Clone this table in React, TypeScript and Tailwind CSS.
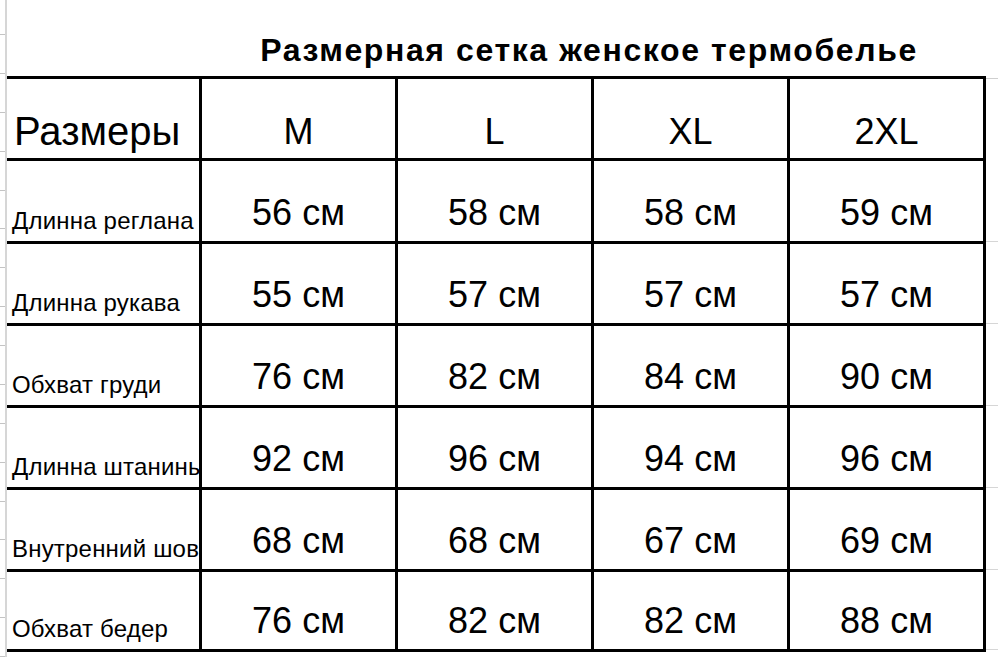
const SIZES = ["M", "L", "XL", "2XL"];

const ROWS: { label: string; values: number[]; h: string }[] = [
  { label: "Длинна реглана", values: [56, 58, 58, 59], h: "h-[83px]" },
  { label: "Длинна рукава", values: [55, 57, 57, 57], h: "h-[82px]" },
  { label: "Обхват груди", values: [76, 82, 84, 90], h: "h-[82px]" },
  { label: "Длинна штанины", values: [92, 96, 94, 96], h: "h-[82px]" },
  { label: "Внутренний шов", values: [68, 68, 67, 69], h: "h-[82px]" },
  { label: "Обхват бедер", values: [76, 82, 82, 88], h: "h-[80px]" },
];

// spreadsheet row ticks in the left gutter
const TICKS = Array.from({ length: 16 }, (_, i) => i);

function Gutter() {
  return (
    <div className="w-[7px] shrink-0 border-r-2 border-[#d6d6d6] flex flex-col">
      <div className="h-[37px] w-[5px] border-b border-[#c4c4c4]" />
      {TICKS.map((t) => (
        <div key={t} className="h-[41px] w-[5px] border-b border-[#c4c4c4]" />
      ))}
    </div>
  );
}

export default function App() {
  return (
    <div className="w-[998px] h-[657px] bg-white flex overflow-hidden text-black font-['Liberation_Sans',Arial,sans-serif]">
      <Gutter />
      <div className="flex flex-col flex-1">
        {/* title over the size columns */}
        <div className="h-[76px] flex">
          <div className="w-[195px]" />
          <div className="w-[784px] flex items-end justify-center pb-[10px] pr-[10px]">
            <h1 className="text-[32px] leading-none font-bold tracking-[1.6px]">
              Размерная сетка женское термобелье
            </h1>
          </div>
        </div>

        <div className="grid grid-cols-[195px_196px_196px_196px_196px_1fr]">
          {/* header row */}
          <div className="h-[85px] border-t-[3px] border-b-[3px] border-r-[3px] border-black flex items-end pl-[7px] pb-[7px]">
            <span className="text-[40px] leading-none">Размеры</span>
          </div>
          {SIZES.map((s) => (
            <div
              key={s}
              className="h-[85px] border-t-[3px] border-b-[3px] border-r-[3px] border-black flex items-end justify-center pb-[8px]"
            >
              <span className="text-[36px] leading-none">{s}</span>
            </div>
          ))}
          <div className="h-[85px] flex flex-col">
            <div className="mt-[2px] border-t border-[#cfcfcf]" />
          </div>

          {ROWS.map((r) => (
            <div key={r.label} className="contents">
              <div
                className={`${r.h} border-b-[3px] border-r-[3px] border-black flex items-end pl-[5px] pb-[8px] overflow-hidden`}
              >
                <span className="text-[24px] leading-none whitespace-nowrap tracking-[0.2px]">{r.label}</span>
              </div>
              {r.values.map((v, i) => (
                <div
                  key={i}
                  className={`${r.h} border-b-[3px] border-r-[3px] border-black flex items-end justify-center pb-[10px]`}
                >
                  <span className="text-[36px] leading-none">{v} см</span>
                </div>
              ))}
              <div className={`${r.h} flex items-end`}>
                <div className="w-full mb-[2px] border-b border-[#d6d6d6]" />
              </div>
            </div>
          ))}
        </div>
      </div>
    </div>
  );
}
